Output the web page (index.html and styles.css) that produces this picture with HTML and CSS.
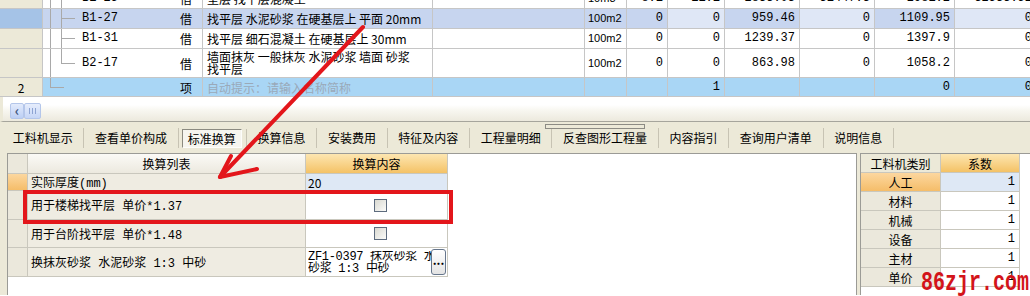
FILE: index.html
```html
<!DOCTYPE html>
<html lang="zh-CN">
<head>
    <meta charset="UTF-8">
    <title>标准换算</title>
    <link rel="stylesheet" href="styles.css">
</head>
<body>
<div class="app">
    <div class="grid-top">
        <div class="row cut">
            <div class="hd"></div>
            <div class="code mid">B1-25</div>
            <div class="ctr">借</div>
            <div class="name">垫层 找平层混凝土</div>
            <div></div>
            <div class="unit">10m3</div>
            <div class="num">8.1</div>
            <div class="num">11.1</div>
            <div class="num">2833.03</div>
            <div class="num">31447.3</div>
            <div class="num">2981.2</div>
            <div class="num">32533.52</div>
        </div>
        <div class="row sel">
            <div class="hd"></div>
            <div class="code mid">B1-27</div>
            <div class="ctr">借</div>
            <div class="name">找平层 水泥砂浆 在硬基层上 平面 20mm</div>
            <div></div>
            <div class="unit">100m2</div>
            <div class="num">0</div>
            <div class="num lt">0</div>
            <div class="num">959.46</div>
            <div class="num lt">0</div>
            <div class="num">1109.95</div>
            <div class="num lt">0</div>
        </div>
        <div class="row">
            <div class="hd"></div>
            <div class="code mid">B1-31</div>
            <div class="ctr">借</div>
            <div class="name">找平层 细石混凝土 在硬基层上 30mm</div>
            <div></div>
            <div class="unit">100m2</div>
            <div class="num">0</div>
            <div class="num">0</div>
            <div class="num">1239.37</div>
            <div class="num">0</div>
            <div class="num">1397.9</div>
            <div class="num">0</div>
        </div>
        <div class="row tall">
            <div class="hd"></div>
            <div class="code last">B2-17</div>
            <div class="ctr">借</div>
            <div class="name wrap">墙面抹灰 一般抹灰 水泥砂浆 墙面 砂浆<br>找平层</div>
            <div></div>
            <div class="unit">100m2</div>
            <div class="num">0</div>
            <div class="num">0</div>
            <div class="num">863.98</div>
            <div class="num">0</div>
            <div class="num">1058.2</div>
            <div class="num">0</div>
        </div>
        <div class="row new">
            <div class="hd">2</div>
            <div class="code root"></div>
            <div class="ctr">项</div>
            <div class="name hint">自动提示：请输入名称简称</div>
            <div></div>
            <div></div>
            <div></div>
            <div class="num">1</div>
            <div></div>
            <div></div>
            <div class="num">0</div>
            <div class="num">0</div>
        </div>
    </div>

    <div class="hscroll">
        <div class="sbtn">&lsaquo;</div>
        <div class="thumb"></div>
    </div>

    <div class="tabs">
        <div class="grip"></div>
        <div class="tab">工料机显示</div>
        <div class="tab">查看单价构成</div>
        <div class="tab on"><span>标准换算</span></div>
        <div class="tab">换算信息</div>
        <div class="tab">安装费用</div>
        <div class="tab">特征及内容</div>
        <div class="tab">工程量明细</div>
        <div class="tab">反查图形工程量</div>
        <div class="tab">内容指引</div>
        <div class="tab">查询用户清单</div>
        <div class="tab">说明信息</div>
    </div>

    <div class="lower">
        <div class="pane-left">
            <div class="cgrid">
                <div class="rh"></div>
                <div class="ch">换算列表</div>
                <div class="ch or">换算内容</div>

                <div class="rh cur"></div>
                <div class="lbl">实际厚度(mm)</div>
                <div class="val edit">20</div>

                <div class="rh"></div>
                <div class="lbl">用于楼梯找平层 单价*1.37</div>
                <div class="val ctr"><span class="chk"></span></div>

                <div class="rh"></div>
                <div class="lbl">用于台阶找平层 单价*1.48</div>
                <div class="val ctr"><span class="chk"></span></div>

                <div class="rh"></div>
                <div class="lbl">换抹灰砂浆 水泥砂浆 1:3 中砂</div>
                <div class="val pick">
                    <span class="ptext">ZF1-0397 抹灰砂浆 水<br>砂浆 1:3 中砂</span>
                    <span class="dots">...</span>
                </div>
            </div>
        </div>
        <div class="pane-right">
            <div class="kgrid">
                <div class="kh">工料机类别</div>
                <div class="kh or">系数</div>
                <div class="kl cur">人工</div><div class="kv edit">1</div>
                <div class="kl">材料</div><div class="kv">1</div>
                <div class="kl">机械</div><div class="kv">1</div>
                <div class="kl">设备</div><div class="kv">1</div>
                <div class="kl">主材</div><div class="kv">1</div>
                <div class="kl">单价</div><div class="kv">1</div>
            </div>
        </div>
    </div>

    <div class="mark-box"></div>
    <svg class="arrow" width="1030" height="296" viewBox="0 0 1030 296">
        <g stroke="#e3161b" stroke-width="4" stroke-linecap="round" stroke-linejoin="round" fill="none">
            <line x1="363" y1="27" x2="220" y2="177"/>
            <polyline points="231,156 220,177 257,169"/>
        </g>
    </svg>
    <div class="watermark">86zjr.com</div>
</div>
</body>
</html>
```

FILE: styles.css
```css
body {
    margin: 0;
    background: #ece9d8;
    font-family: "Noto Sans CJK SC", sans-serif;
    font-size: 12px;
    color: #000;
}
.app {
    width: 1030px;
    height: 296px;
    position: relative;
    overflow: hidden;
    background: #fff;
}

/* top grid */
.grid-top {
    height: 97px;
    overflow: hidden;
}
.row {
    display: grid;
    grid-template-columns: 43px 127px 33px 230px 152px 42px 41px 57px 75px 75px 80px 82px;
    height: 20px;
    box-sizing: border-box;
    border-bottom: 1px solid #c6c6c6;
    width: 1037px;
}
.row.cut {
    margin-top: -11px;
}
.row.tall {
    height: 29px;
}
.row.new {
    height: 19px;
}
.row > div {
    display: flex;
    align-items: center;
    border-right: 1px solid #c6c6c6;
    padding: 0 3px;
    overflow: hidden;
    white-space: nowrap;
    line-height: 13px;
}
.row > .code {
    border-right: none;
    padding-left: 39px;
    font-family: "Liberation Mono", monospace;
    font-size: 12px;
}
.hd {
    background: #ece9d8;
    justify-content: center;
}
.ctr {
    justify-content: center;
}
.name {
    padding-left: 4px !important;
}
.name.wrap {
    white-space: normal;
    line-height: 12px;
}
.hint {
    color: #9aa9b9;
}
.unit {
    font-family: "Liberation Sans", sans-serif;
    font-size: 11px;
}
.num {
    justify-content: flex-end;
    font-family: "Liberation Mono", monospace;
    padding-right: 4px !important;
}

/* tree lines */
.code.mid {
    background:
        linear-gradient(#a9a9a9, #a9a9a9) 7px 0 / 1px 100% no-repeat,
        linear-gradient(#a9a9a9, #a9a9a9) 18px 0 / 1px 100% no-repeat,
        linear-gradient(#a9a9a9, #a9a9a9) 18px 50% / 14px 1px no-repeat;
}
.code.last {
    background:
        linear-gradient(#a9a9a9, #a9a9a9) 7px 0 / 1px 100% no-repeat,
        linear-gradient(#a9a9a9, #a9a9a9) 18px 0 / 1px 50% no-repeat,
        linear-gradient(#a9a9a9, #a9a9a9) 18px 50% / 14px 1px no-repeat;
}
.code.root {
    background:
        linear-gradient(#a9a9a9, #a9a9a9) 7px 0 / 1px 50% no-repeat,
        linear-gradient(#a9a9a9, #a9a9a9) 7px 50% / 14px 1px no-repeat;
}

.row.sel > div {
    background-color: #c7d5ef;
}
.row.sel > .lt {
    background-color: #dfe7f6;
}
.row.sel > .hd {
    background: #a5c3e7;
}
.row.new > div {
    background-color: #a9d6f5;
}
.row.new > .hd {
    background: #ece9d8;
}

/* horizontal scroll */
.hscroll {
    height: 25px;
    box-sizing: border-box;
    border-bottom: 1px solid #a6a59c;
    border-left: 3px solid #ece9d8;
    background: linear-gradient(#fff 0, #fff 8px, #f8f7f1 13px, #ece9dd 24px);
    display: flex;
    align-items: flex-end;
    padding: 0 0 2px 7px;
}
.sbtn {
    width: 12px;
    height: 14px;
    border: 1px solid #b4c6ea;
    border-radius: 2px;
    background: linear-gradient(#e3ebfc, #bccff4);
    color: #3f5680;
    font-size: 14px;
    font-weight: bold;
    line-height: 12px;
    text-align: center;
}
.thumb {
    width: 15px;
    height: 14px;
    border: 1px solid #b4c6ea;
    border-radius: 2px;
    background:
        repeating-linear-gradient(90deg, #8ea4d2 0 1px, transparent 1px 3px) 4px 4px / 7px 6px no-repeat,
        linear-gradient(#e6edfc, #c6d6f6);
}

/* tabs */
.tabs {
    position: relative;
    display: flex;
    align-items: center;
    height: 30px;
    padding: 2px 0 0 2px;
    box-sizing: border-box;
    background: #ece9d8;
}
.tab {
    padding: 0 10.7px;
    border-right: 1px solid #c7c3b3;
    line-height: 20px;
    white-space: nowrap;
}
.tab:first-of-type {
    padding-left: 11px;
}
.tab.on {
    padding: 0 4px 0 3px;
}
.tab.on span {
    display: block;
    padding: 0 5px;
    line-height: 17px;
    border: 1px solid;
    border-color: #8b8a80 #fdfdfb #fdfdfb #8b8a80;
    background: #f6f5ef;
}
.grip {
    position: absolute;
    left: 545px;
    top: 2px;
    width: 98px;
    height: 3px;
    border: 1px solid #8c8b84;
    background:
        radial-gradient(#555 40%, transparent 45%) 5px 1px / 2px 2px no-repeat,
        radial-gradient(#555 40%, transparent 45%) 91px 1px / 2px 2px no-repeat;
}

/* lower area */
.lower {
    display: flex;
    gap: 3px;
    height: 143px;
    box-sizing: border-box;
    padding: 1px 0 0 7px;
    background: #ece9d8;
}
.pane-left {
    width: 850px;
    border: 1px solid #9b9b96;
    border-bottom: none;
    background: #fff;
    box-sizing: border-box;
}
.pane-right {
    flex: 1;
    border-left: 1px solid #9b9b96;
    border-top: 1px solid #9b9b96;
    background: #fff;
}
.cgrid {
    display: grid;
    grid-template-columns: 20px 278px 142px;
    grid-template-rows: 20px 17px 29px 28px 29px;
    width: 440px;
}
.cgrid > div {
    box-sizing: border-box;
    border-right: 1px solid #c9c7bd;
    border-bottom: 1px solid #c9c7bd;
    display: flex;
    align-items: center;
    white-space: nowrap;
    overflow: hidden;
}
.rh {
    background: #ebe8dc;
}
.rh.cur {
    background: linear-gradient(#fcd79f, #f5bd69);
}
.ch {
    justify-content: center;
    background: linear-gradient(#fbfaf6, #ece9df);
}
.ch.or, .kh.or {
    background: linear-gradient(#fde6b1, #f4c266);
}
.lbl {
    background: #efece2;
    padding-left: 3px;
    font-family: "Liberation Mono", "Noto Sans CJK SC", monospace;
}
.val {
    padding-left: 2px;
    background: #fff;
}
.val.edit, .kv.edit {
    background: #dee8f5;
}
.val.ctr {
    justify-content: center;
}
.chk {
    width: 11px;
    height: 11px;
    border: 1px solid #5d6b7e;
    background: linear-gradient(135deg, #d9d9d1, #fbfbf9);
    margin-left: 5px;
}
.val.pick {
    padding-right: 1px;
}
.ptext {
    flex: 1;
    min-width: 0;
    overflow: hidden;
    white-space: nowrap;
    font-family: "Liberation Mono", "Noto Sans CJK SC", monospace;
    letter-spacing: -0.3px;
    line-height: 12px;
    margin-top: 1px;
}
.dots {
    flex: none;
    width: 15px;
    height: 26px;
    box-sizing: border-box;
    margin-left: -6px;
    border: 1px solid #66768c;
    border-radius: 3px;
    background: linear-gradient(#fff, #e4e4e4);
    font-weight: bold;
    font-size: 12px;
    line-height: 20px;
    text-align: center;
    position: relative;
}

/* right coefficient grid */
.kgrid {
    display: grid;
    grid-template-columns: 80px 79px;
    grid-template-rows: 19px repeat(6, 19px);
}
.kgrid > div {
    box-sizing: border-box;
    border-right: 1px solid #c9c7bd;
    border-bottom: 1px solid #c9c7bd;
    display: flex;
    align-items: center;
}
.kh {
    justify-content: center;
    background: #ece9d8;
}
.kl {
    justify-content: center;
    background: #ebe8dc;
}
.kl.cur {
    background: linear-gradient(#fcd79f, #f5bd69);
}
.kv {
    justify-content: flex-end;
    padding-right: 4px;
    font-family: "Liberation Mono", monospace;
}

/* overlays */
.mark-box {
    position: absolute;
    left: 23px;
    top: 190px;
    width: 430px;
    height: 34px;
    border: 4px solid #e3161b;
    box-sizing: border-box;
}
.arrow {
    position: absolute;
    left: 0;
    top: 0;
}
.watermark {
    position: absolute;
    left: 921px;
    top: 270px;
    font-family: "Liberation Mono", monospace;
    font-weight: bold;
    font-size: 20px;
    line-height: 20px;
    color: #d3141a;
    transform: scaleY(1.35);
    transform-origin: left top;
    white-space: nowrap;
}
```
